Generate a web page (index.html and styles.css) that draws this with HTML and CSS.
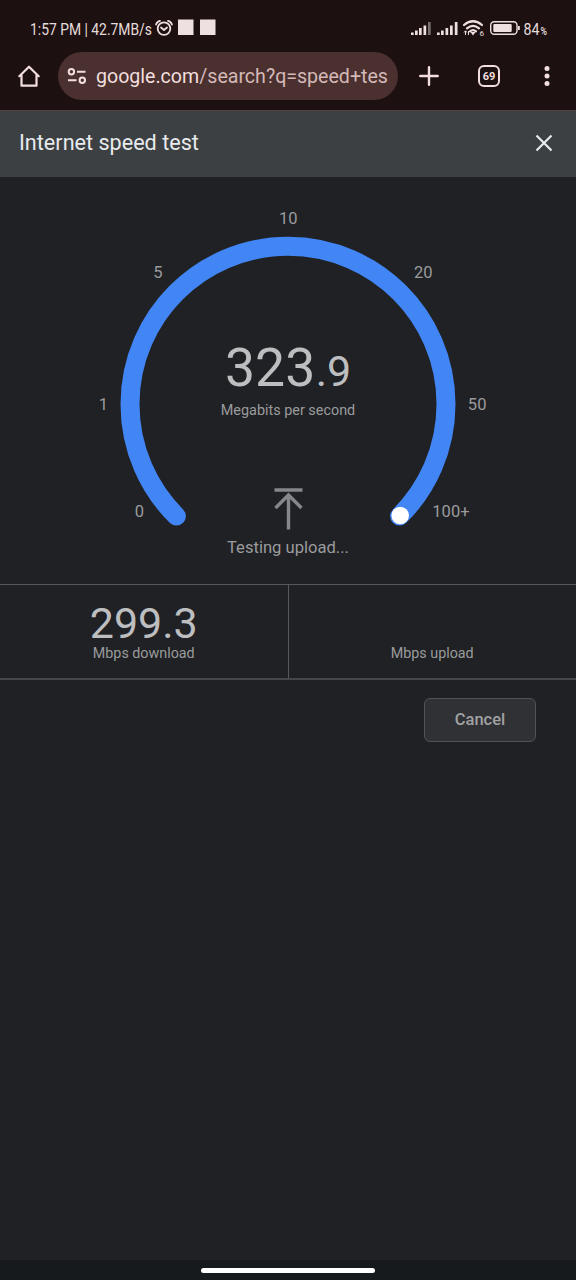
FILE: index.html
```html
<!DOCTYPE html>
<html lang="en">
<head>
<meta charset="utf-8">
<title>Internet speed test</title>
<link rel="stylesheet" href="styles.css">
</head>
<body>
<header class="chrome">
  <div class="status">
    <svg class="status-left" width="190" height="28" viewBox="0 0 190 28">
      <text class="status-text" x="0" y="20" textLength="122" lengthAdjust="spacingAndGlyphs">1:57 PM | 42.7MB/s</text>
      <g fill="none" stroke="currentColor" stroke-width="1.8" stroke-linecap="round" stroke-linejoin="round">
        <circle cx="134" cy="13.6" r="6.3"/>
        <path d="M131 12.5l3 2.5 3-2.5M126 9.500q1-3 4-3.700M142 9.500q-1-3-4-3.700"/>
      </g>
      <path fill="currentColor" d="M148 4.500h15.500v15.500H148zM170 4.500h15.500v15.500H170z"/>
    </svg>
    <svg class="status-right" width="138" height="28" viewBox="0 0 138 28">
      <path fill="currentColor" d="M1 17.500h2.700v2.500H1zM5 15.500h2.700v4.500H5zM9 13h2.700v7H9zM13.500 10.500h2.700v9.500h-2.700zM27 17.500h2.700v2.500H27zM31 15.500h2.700v4.500H31zM35.500 13h2.700v7h-2.700zM40 10.500h2.700v9.500H40zM44.800 7h2.700v13h-2.700z"/>
      <path class="signal-off" d="M18 7h2.700v13H18z"/>
      <g fill="none" stroke="currentColor" stroke-width="2.200" stroke-linecap="round">
        <path d="M54 10Q63 2.500 72 10M57 13.300q6-5 12 0M60 16.300q3-2.500 6 0"/>
      </g>
      <path fill="currentColor" d="M60.500 17h5L63 20.500z"/>
      <path fill="none" stroke="currentColor" stroke-width="1" d="M55.500 20v-4M54 17.500l1.500-1.700 1.500 1.700M58.500 16v4"/>
      <text class="wifi-gen" x="69.500" y="21">6</text>
      <rect x="80.700" y="6.700" width="26.300" height="12.600" rx="3.500" fill="none" stroke="currentColor" stroke-width="1.400"/>
      <rect x="83.300" y="9.100" width="18.400" height="7.800" rx="1" fill="currentColor"/>
      <path fill="currentColor" d="M108 11h1.800v4H108z"/>
      <text class="status-text" x="113.500" y="20" textLength="16" lengthAdjust="spacingAndGlyphs">84</text>
      <text class="percent" x="130.500" y="19.500" textLength="6.500" lengthAdjust="spacingAndGlyphs">%</text>
    </svg>
  </div>
  <div class="toolbar">
    <svg class="home" width="24" height="24" viewBox="0 0 24 24" fill="none" stroke="currentColor" stroke-width="2.200" stroke-linejoin="round" stroke-linecap="round"><path d="M2.300 12.200L12 2.700l9.700 9.500M4.500 10.500v11.200h15V10.500"/></svg>
    <div class="address">
      <svg width="20" height="18" viewBox="0 0 20 18" fill="none" stroke="currentColor" stroke-width="2"><circle cx="4.400" cy="4.700" r="2.700"/><path d="M10 4.700h8.500M1 13.200h8.500"/><circle cx="15.300" cy="13.200" r="2.700"/></svg>
      <span class="url">google.com<span class="path">/search?q=speed+tes</span></span>
    </div>
    <svg class="plus" width="20" height="20" viewBox="0 0 20 20" stroke="currentColor" stroke-width="2.400" stroke-linecap="round"><path d="M10 1.300v17.400M1.300 10h17.400"/></svg>
    <span class="tabs">69</span>
    <svg class="more" width="6" height="20" viewBox="0 0 6 20" fill="currentColor"><circle cx="3" cy="2.600" r="2.500"/><circle cx="3" cy="10" r="2.500"/><circle cx="3" cy="17.400" r="2.500"/></svg>
  </div>
</header>
<section class="title-bar">
  <h1>Internet speed test</h1>
  <svg width="18" height="18" viewBox="0 0 18 18" stroke="currentColor" stroke-width="2.200"><path d="M1.500 1.500l15 15M16.500 1.500l-15 15"/></svg>
</section>
<main>
  <svg class="gauge" width="576" height="407" viewBox="0 177 576 407">
    <path class="arc" d="M176.400 516.100A158 158 0 1 1 399.600 516.100"/>
    <circle cx="400.200" cy="515.500" r="8.800" fill="#fff"/>
    <g class="ticks">
      <text x="139.500" y="517">0</text>
      <text x="103.500" y="410">1</text>
      <text x="158" y="278">5</text>
      <text x="288.300" y="224">10</text>
      <text x="423.300" y="278">20</text>
      <text x="477.200" y="410">50</text>
      <text x="451" y="517">100+</text>
    </g>
    <text class="speed" x="225" y="386">323<tspan class="decimal" dx="0.500">.9</tspan></text>
    <text class="unit" x="288" y="415">Megabits per second</text>
    <path class="upload" d="M274.500 490h28M288.500 529.500v-34M275.500 508l13-13 13 13"/>
    <text class="state" x="288" y="553">Testing upload...</text>
  </svg>
  <div class="results">
    <div class="result"><span class="value">299.3</span><span class="label">Mbps download</span></div>
    <div class="result"><span class="value"></span><span class="label">Mbps upload</span></div>
  </div>
  <div class="actions"><button class="cancel">Cancel</button></div>
</main>
<footer class="nav"><div class="handle"></div></footer>
</body>
</html>
```
FILE: styles.css
```css
* { box-sizing: border-box; }
body {
  margin: 0;
  height: 1280px;
  display: flex;
  flex-direction: column;
  background: #202124;
  font-family: Roboto, sans-serif;
  color: #bdc1c6;
  overflow: hidden;
}
svg { display: block; flex: none; }
.chrome { height: 110px; background: #1d1010; color: #eee0e0; }
.status { height: 52px; padding: 15px 28px 0 30px; display: flex; justify-content: space-between; }
.status-text { font-size: 17px; fill: #e6dcdc; }
.signal-off { fill: #786e6e; }
.wifi-gen { font-size: 8px; fill: currentColor; }
.percent { font-size: 10px; font-weight: 500; fill: currentColor; }
.toolbar { height: 48px; padding: 0 26px 0 17px; display: flex; align-items: center; color: #f2dede; }
.address {
  width: 340px;
  height: 48px;
  margin-left: 17px;
  padding-left: 9px;
  display: flex;
  align-items: center;
  gap: 9px;
  border-radius: 24px;
  background: #4a302f;
}
.url { font-size: 19.6px; letter-spacing: -.01px; line-height: 24px; padding-top: 1px; white-space: nowrap; }
.path { color: #d4b9b8; }
.plus { margin-left: 21px; }
.tabs {
  width: 22px;
  height: 22px;
  margin-left: 39px;
  display: flex;
  align-items: center;
  justify-content: center;
  border: 2px solid currentColor;
  border-radius: 6px;
  font-size: 11px;
  font-weight: 700;
}
.more { margin-left: auto; }
.title-bar {
  height: 67px;
  padding: 0 23px 3px 19px;
  display: flex;
  align-items: center;
  justify-content: space-between;
  background: #3c4043;
  border-top: 1px solid #544444;
  color: #e8eaed;
}
.title-bar h1 { margin: 0; font-size: 21.6px; line-height: 26px; font-weight: 400; }
main { flex: 1; }
.arc { fill: none; stroke: #4285f4; stroke-width: 19; stroke-linecap: round; }
.ticks { font-size: 16.5px; letter-spacing: .1px; text-anchor: middle; fill: #9a9b9d; }
.speed { font-size: 53.5px; fill: #bdbec0; }
.decimal { font-size: 43px; }
.unit { font-size: 14.4px; text-anchor: middle; fill: #9a9b9d; }
.upload { fill: none; stroke: #85878a; stroke-width: 3.4; }
.state { font-size: 16.6px; text-anchor: middle; fill: #9a9b9d; }
.results { height: 96px; display: flex; border-top: 1px solid #56585b; border-bottom: 2px solid #444649; }
.result { flex: 1; display: flex; flex-direction: column; align-items: center; padding-top: 17px; }
.result:first-child { border-right: 1px solid #56585b; }
.value { height: 43px; line-height: 43px; font-size: 43px; color: #bdbec0; }
.label { line-height: 17px; font-size: 14.3px; color: #9a9b9d; }
.actions { display: flex; justify-content: flex-end; padding: 18px 40px 0 0; }
.cancel {
  width: 112px;
  height: 44px;
  padding: 0 0 2px;
  border: 1px solid #505255;
  border-radius: 6px;
  background: #303134;
  color: #a0a1a3;
  font: 500 16.5px Roboto, sans-serif;
}
.nav { height: 20px; padding-top: 8px; background: #171a1c; }
.handle { width: 174px; height: 5px; margin: 0 auto; border-radius: 3px; background: #fff; }
```
